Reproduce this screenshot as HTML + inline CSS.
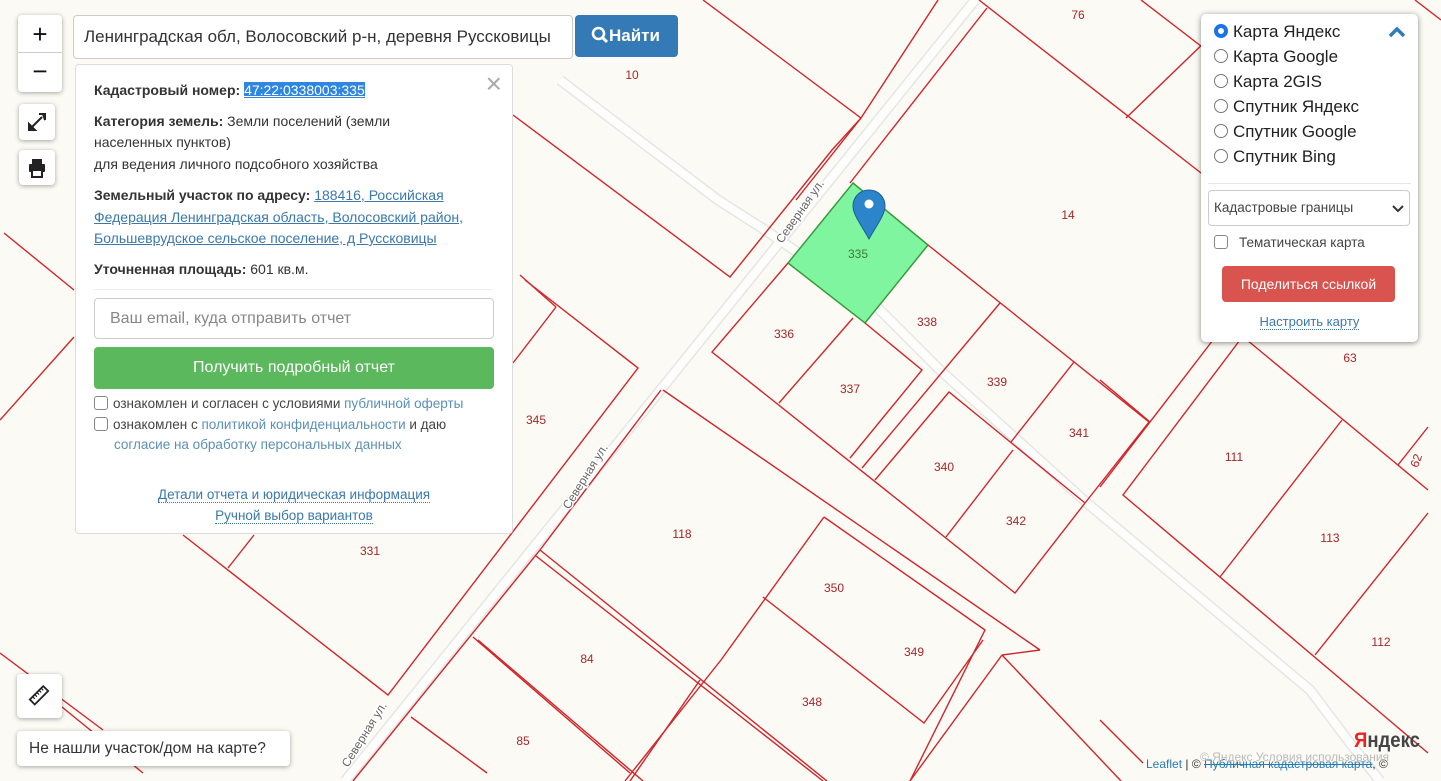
<!DOCTYPE html>
<html><head><meta charset="utf-8">
<style>
*{box-sizing:border-box}
body{margin:0;width:1441px;height:781px;overflow:hidden;background:#fbfaf4;font-family:"Liberation Sans",Arial,sans-serif;position:relative}
#map{position:absolute;left:0;top:0}
.btn{position:absolute;background:#fff;border-radius:4px;box-shadow:0 1px 5px rgba(0,0,0,.35);}
.pop{position:absolute;left:75px;top:64px;width:438px;height:470px;background:#fff;border:1px solid #ddd;border-radius:4px;padding:0 18px;font-size:14px;color:#333;line-height:21.5px}
.pop b{color:#333}
.pop a{color:#3a78ae;text-decoration:underline}
.lnk{color:#5b8fb9}
.dot{color:#3a78ae;text-decoration:none;border-bottom:1px dotted #3a78ae}
.cb{display:inline-block;width:14px;height:14px;border:1px solid #888;border-radius:3px;vertical-align:-2px;margin-right:5px;background:#fff}
.lay{position:absolute;left:1201px;top:14px;width:217px;height:328px;background:#fff;border-radius:5px;box-shadow:0 1px 6px rgba(0,0,0,.45);font-size:17px;color:#222}
.r{position:absolute;left:13px;height:25px;line-height:25px}
.rad{display:inline-block;width:14px;height:14px;border:1px solid #777;border-radius:50%;vertical-align:-1px;margin-right:5px;background:#fff}
</style></head><body>
<svg id="map" width="1441" height="781" viewBox="0 0 1441 781">
<g fill="none" stroke="#e6e6e6" stroke-width="11" stroke-linecap="butt">
<path d="M975 0 L345 781"/>
<path d="M560 80 L718 200 L765 230 L877 307 L940 370 L1087 503 L1310 690 L1353 747 L1380 781"/>
</g>
<g fill="none" stroke="#fdfdfb" stroke-width="8">
<path d="M975 0 L345 781"/>
<path d="M560 80 L718 200 L765 230 L877 307 L940 370 L1087 503 L1310 690 L1353 747 L1380 781"/>
</g>
<polygon points="853,183 928,245 865,323 788,263" fill="#7ff5a0" stroke="#3c9a3c" stroke-width="1.5"/>
<g fill="none" stroke="#d0262b" stroke-width="1.4">
<path d="M703 0 L861 118 L938 0"/>
<path d="M861 118 L796 200"/>
<path d="M513 115 L730 277 L832 150 L861 118"/>
<path d="M987 8 L850 183"/>
<path d="M979 0 L1210 180"/>
<path d="M1141 0 L1210 53"/>
<path d="M1210 37 L1126 118"/>
<path d="M928 245 L1149 422"/>
<path d="M788 263 L712 352 L1015 593 L1085 503 L1149 422"/>
<path d="M853 318 L779 403"/>
<path d="M865 323 L922 370 L850 458"/>
<path d="M862 468 L1000 303"/>
<path d="M875 480 L949 392 L1085 503"/>
<path d="M1074 362 L1011 442"/>
<path d="M1013 450 L946 537"/>
<path d="M1100 380 L1150 422"/>
<path d="M1213 340 L1100 487"/>
<path d="M1240 340 L1123 495 L1428 753"/>
<path d="M1247 340 L1428 490"/>
<path d="M1342 420 L1220 577"/>
<path d="M1428 513 L1315 655"/>
<path d="M1428 427 L1398 465"/>
<path d="M1100 720 L1143 763"/>
<path d="M1415 0 L1441 20"/>
<path d="M525 280 L638 368 L388 695 L183 535"/>
<path d="M556 307 L513 363"/>
<path d="M520 275 L556 307"/>
<path d="M254 535 L228 568"/>
<path d="M74 337 L0 420"/>
<path d="M4 233 L74 290"/>
<path d="M0 653 L103 730"/>
<path d="M62 707 L143 773"/>
<path d="M661 390 L540 550 L353 781"/>
<path d="M663 390 L1040 650"/>
<path d="M540 550 L827 781"/>
<path d="M536 556 L823 781"/>
<path d="M824 517 L721 660 L625 781"/>
<path d="M824 517 L985 630 L910 781"/>
<path d="M763 597 L924 723 L983 640"/>
<path d="M473 637 L630 773"/>
<path d="M411 717 L487 773"/>
<path d="M700 680 L630 781"/>
<path d="M1002 655 L1121 781"/>
<path d="M1002 655 L910 781"/>
<path d="M1040 650 L1002 655"/>
<path d="M478 640 L643 781"/>
</g>
<g font-family="Liberation Sans,sans-serif" font-size="12" fill="#a5262b" text-anchor="middle">
<text x="632" y="79">10</text><text x="1078" y="19">76</text><text x="1068" y="219">14</text>
<text x="858" y="258" fill="#3c7a3c">335</text><text x="784" y="338">336</text><text x="927" y="326">338</text>
<text x="850" y="393">337</text><text x="997" y="386">339</text><text x="1079" y="437">341</text>
<text x="944" y="471">340</text><text x="1016" y="525">342</text><text x="1350" y="362">63</text>
<text x="1234" y="461">111</text><text x="1330" y="542">113</text><text x="1381" y="646">112</text>
<text x="536" y="424">345</text><text x="370" y="555">331</text><text x="682" y="538">118</text>
<text x="834" y="592">350</text><text x="914" y="656">349</text><text x="587" y="663">84</text>
<text x="812" y="706">348</text><text x="523" y="745">85</text>
<text x="1420" y="462" transform="rotate(-70 1420 462)">62</text>
</g>
<g font-family="Liberation Sans,sans-serif" font-size="12" fill="#666" stroke="#fff" stroke-width="3" paint-order="stroke">
<text transform="translate(782 244) rotate(-55)">Северная ул.</text>
<text transform="translate(569 510) rotate(-58)">Северная ул.</text>
<text transform="translate(348 768) rotate(-58)">Северная ул.</text>
</g>
<g>
<path d="M869 190 C859 190 853 198 853 206 C853 215 862 226 869 239 C876 226 885 215 885 206 C885 198 879 190 869 190Z" fill="#2c84cb" stroke="#1c5f97" stroke-width="1"/>
<circle cx="869" cy="204" r="4.5" fill="#fff"/>
</g>
<text x="1420" y="747" font-family="Liberation Sans,sans-serif" font-size="21" font-weight="bold" text-anchor="end" fill="#444" textLength="66" lengthAdjust="spacingAndGlyphs"><tspan fill="#e22">Я</tspan>ндекс</text>
</svg>

<div class="btn" style="left:18px;top:15px;width:44px;height:77px">
<div style="height:38px;border-bottom:1px solid #ccc;text-align:center;font-size:26px;line-height:38px;color:#111">+</div>
<div style="text-align:center;font-size:26px;line-height:36px;color:#111">−</div></div>
<div class="btn" style="left:19px;top:104px;width:36px;height:36px">
<svg width="36" height="36"><g stroke="#222" stroke-width="2" fill="#222"><path d="M13 23 L23 13"/><path d="M24 10 L26 10 L26 16 Z M20 10 L26 10" /><path d="M10 26 L10 20 L16 26 Z"/></g></svg></div>
<div class="btn" style="left:19px;top:150px;width:36px;height:35px">
<svg width="36" height="35"><g fill="#222"><rect x="13" y="9" width="10" height="5"/><rect x="10" y="14" width="16" height="8" rx="1"/><rect x="13" y="20" width="10" height="7" fill="#fff" stroke="#222" stroke-width="2"/></g></svg></div>

<div style="position:absolute;left:73px;top:15px;width:500px;height:44px;background:#fff;border:1px solid #ccc;border-radius:4px;font-size:17px;line-height:42px;padding-left:10px;color:#333">Ленинградская обл, Волосовский р-н, деревня Руссковицы</div>
<div style="position:absolute;left:575px;top:15px;width:103px;height:42px;background:#337ab7;border-radius:4px;color:#fff;font-size:17px;line-height:42px;padding-left:16px;font-weight:bold">
<svg width="18" height="18" style="vertical-align:-3px"><circle cx="7.5" cy="7.5" r="5.5" stroke="#fff" stroke-width="2.6" fill="none"/><path d="M11.5 11.5 L16 16" stroke="#fff" stroke-width="3"/></svg>Найти</div>

<div class="pop">
<div style="position:absolute;right:10px;top:4px;font-size:28px;color:#aaa;line-height:30px">×</div>
<div style="margin-top:15px"><b>Кадастровый номер:</b> <span style="background:#2f86e0;color:#fff;text-decoration:underline">47:22:0338003:335</span></div>
<div style="margin-top:9px"><b>Категория земель:</b> Земли поселений (земли<br>населенных пунктов)<br>для ведения личного подсобного хозяйства</div>
<div style="margin-top:10px"><b>Земельный участок по адресу:</b> <a>188416, Российская Федерация Ленинградская область, Волосовский район, Большеврудское сельское поселение, д Руссковицы</a></div>
<div style="margin-top:9px"><b>Уточненная площадь:</b> 601 кв.м.</div>
<div style="border-top:1px solid #eee;margin-top:9px;padding-top:8px">
<div style="height:41px;border:1px solid #ccc;border-radius:4px;font-size:16px;color:#888;line-height:39px;padding-left:15px">Ваш email, куда отправить отчет</div>
<div style="margin-top:8px;height:42px;background:#5cb85c;border-radius:4px;color:#fff;font-size:16px;text-align:center;line-height:42px">Получить подробный отчет</div>
<div style="margin-top:5px;font-size:13.5px;line-height:20.5px;color:#444"><span class="cb"></span>ознакомлен и согласен с условиями <span class="lnk">публичной оферты</span><br><span class="cb"></span>ознакомлен с <span class="lnk">политикой конфиденциальности</span> и даю<br><span style="padding-left:20px" class="lnk">согласие на обработку персональных данных</span></div>
<div style="margin-top:28px;text-align:center;font-size:13.5px;line-height:21px"><span class="dot">Детали отчета и юридическая информация</span><br><span class="dot">Ручной выбор вариантов</span></div>
</div>
</div>

<div class="lay">
<div class="r" style="top:5px"><span class="rad" style="border:4px solid #1a73e8"></span>Карта Яндекс</div>
<svg style="position:absolute;left:187px;top:12px" width="18" height="12"><path d="M2 10 L9 3 L16 10" stroke="#337ab7" stroke-width="3.5" fill="none"/></svg>
<div class="r" style="top:30px"><span class="rad"></span>Карта Google</div>
<div class="r" style="top:55px"><span class="rad"></span>Карта 2GIS</div>
<div class="r" style="top:80px"><span class="rad"></span>Спутник Яндекс</div>
<div class="r" style="top:105px"><span class="rad"></span>Спутник Google</div>
<div class="r" style="top:130px"><span class="rad"></span>Спутник Bing</div>
<div style="position:absolute;left:7px;right:7px;top:169px;border-top:1px solid #e5e5e5"></div>
<div style="position:absolute;left:7px;top:176px;width:202px;height:36px;border:1px solid #ccc;border-radius:4px;font-size:13.5px;line-height:34px;padding-left:5px;color:#444">Кадастровые границы<svg style="position:absolute;right:5px;top:13px" width="12" height="9"><path d="M1 2 L6 7 L11 2" stroke="#333" stroke-width="2" fill="none"/></svg></div>
<div style="position:absolute;left:13px;top:221px;font-size:13.5px;color:#444"><span class="cb" style="margin-right:11px"></span>Тематическая карта</div>
<div style="position:absolute;left:21px;top:252px;width:173px;height:36px;background:#d9534f;border-radius:4px;color:#fff;font-size:14px;text-align:center;line-height:36px">Поделиться ссылкой</div>
<div style="position:absolute;left:0;right:0;top:300px;text-align:center;font-size:13px"><span class="dot">Настроить карту</span></div>
</div>

<div class="btn" style="left:17px;top:674px;width:45px;height:44px">
<svg width="45" height="44"><g transform="rotate(-45 22 22)"><rect x="13" y="18" width="19" height="7" fill="none" stroke="#222" stroke-width="1.8"/><path d="M17 18v3M20 18v3M23 18v3M26 18v3M29 18v3" stroke="#222" stroke-width="1.2"/></g></svg></div>
<div class="btn" style="left:17px;top:731px;width:273px;height:35px;font-size:15.5px;line-height:35px;padding-left:12px;color:#333">Не нашли участок/дом на карте?</div>

<div style="position:absolute;left:1146px;top:757px;font-size:12px;color:#333;white-space:nowrap"><span style="color:#2a7ab0">Leaflet</span> | © <span style="color:#2a7ab0;text-decoration:line-through">Публичная кадастровая карта</span>, ©</div>
<div style="position:absolute;left:1200px;top:750px;font-size:12px;color:#bbb;white-space:nowrap">© Яндекс  Условия использования</div>
</body></html>
